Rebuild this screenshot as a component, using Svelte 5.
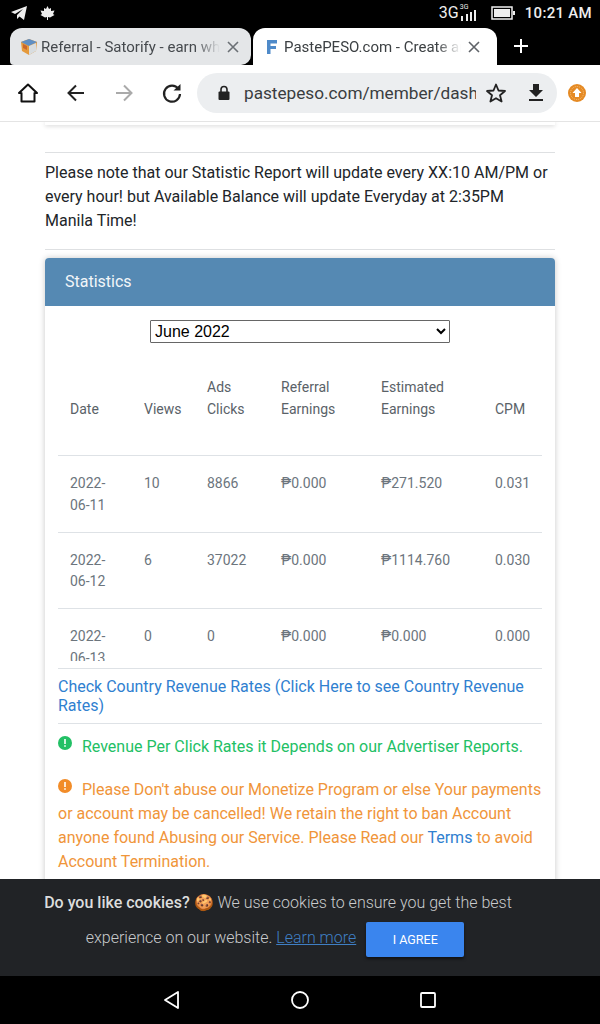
<script>
  const rows = [
    { date: "2022-06-11", views: "10", clicks: "8866", ref: "₱0.000", est: "₱271.520", cpm: "0.031" },
    { date: "2022-06-12", views: "6", clicks: "37022", ref: "₱0.000", est: "₱1114.760", cpm: "0.030" },
    { date: "2022-06-13", views: "0", clicks: "0", ref: "₱0.000", est: "₱0.000", cpm: "0.000" },
  ];
</script>

<div class="screen">
  <div class="status">
    <div class="status-left">
      <svg width="20" height="16" viewBox="0 0 20 16"><path d="M1 7 L17 1 L14 15 L9.500 11.500 L7 14 L7 10 L13 4 L5 9 Z" fill="#eee" /></svg>
      <svg width="15" height="14" viewBox="0 0 15 14"><path d="M7.500 0 L9 3 L11 2 L11 5 L14.500 4.500 L13 8 L14.500 9 L10 11.500 L8 11 L8 14 L7 14 L7 11 L5 11.500 L.5 9 L2 8 L.5 4.500 L4 5 L4 2 L6 3 Z" fill="#eee" /></svg>
    </div>
    <div class="status-right">
      <span class="net">3G</span>
      <span class="signal">
        <span class="net-small">3G</span>
        <svg width="18" height="12" viewBox="0 0 18 12"><path d="M1 6h2v5H1zM6 4h2v7H6zM10 2h2v9h-2zM14 0h2v11h-2z" fill="#eee" /></svg>
      </span>
      <svg class="battery" width="24" height="14" viewBox="0 0 24 14"><rect x="1" y="1" width="20" height="12" fill="none" stroke="#eee" stroke-width="1.500" /><rect x="3" y="3" width="16" height="8" fill="#eee" /><rect x="22" y="5" width="2" height="4" fill="#eee" /></svg>
      <span class="clock">10:21 AM</span>
    </div>
  </div>

  <div class="tabs">
    <div class="tab inactive">
      <svg class="favicon" width="18" height="18" viewBox="0 0 18 18"><path d="M9 1 L17 4 L16 13 L9 17 L2 13 L1 4 Z" fill="#e59a3c" /><path d="M9 1 L17 4 L9 8 L1 4 Z" fill="#5f8fc4" /><path d="M9 8 L16 5 L16 13 L9 17 Z" fill="#d8dde0" /><path d="M3 6 L7 8 L7 12 L3 10 Z" fill="#c9672c" /></svg>
      <span class="tab-title">Referral - Satorify - earn wh</span>
      <svg class="close" width="14" height="14" viewBox="0 0 14 14"><path d="M2 2 L12 12 M12 2 L2 12" stroke="#6b7075" stroke-width="1.600" /></svg>
    </div>
    <div class="tab active">
      <svg class="favicon" width="18" height="18" viewBox="0 0 18 18"><path d="M4 2 H14 V5.500 H7.500 V8 H13 V11 H7.500 V16 H4 Z" fill="#4f8ac9" /></svg>
      <span class="tab-title">PastePESO.com - Create ar</span>
      <svg class="close" width="14" height="14" viewBox="0 0 14 14"><path d="M2 2 L12 12 M12 2 L2 12" stroke="#5f6368" stroke-width="1.600" /></svg>
    </div>
    <svg class="plus" width="16" height="16" viewBox="0 0 16 16"><path d="M8 1 V15 M1 8 H15" stroke="#fff" stroke-width="2" /></svg>
  </div>

  <div class="toolbar">
    <svg class="tool" width="22" height="22" viewBox="0 0 22 22"><path d="M11 2.500 L20 11 H17.500 V19.500 H4.500 V11 H2 Z" fill="none" stroke="#111" stroke-width="2" stroke-linejoin="round" /></svg>
    <svg class="tool" width="22" height="22" viewBox="0 0 22 22"><path d="M19 11 H4 M11 3.500 L3.500 11 L11 18.500" fill="none" stroke="#222" stroke-width="2" /></svg>
    <svg class="tool" width="22" height="22" viewBox="0 0 22 22"><path d="M3 11 H18 M11 3.500 L18.500 11 L11 18.500" fill="none" stroke="#aaa" stroke-width="2" /></svg>
    <svg class="tool" width="22" height="22" viewBox="0 0 22 22"><path d="M17.500 7 A8 8 0 1 0 19 12" fill="none" stroke="#222" stroke-width="2.200" /><path d="M12.500 8.500 L19.500 8.500 L19.500 2 Z" fill="#222" /></svg>
    <div class="omnibox">
      <svg width="14" height="16" viewBox="0 0 14 16"><path d="M4 7 V4.500 A3 3 0 0 1 10 4.500 V7" fill="none" stroke="#222" stroke-width="1.600" /><rect x="1.500" y="6.500" width="11" height="8.500" rx="1" fill="#222" /></svg>
      <span class="url">pastepeso.com/member/dash</span>
      <svg class="star" width="22" height="22" viewBox="0 0 22 22"><path d="M11 2.500 L13.500 8.500 L20 9 L15 13.200 L16.600 19.500 L11 16.200 L5.400 19.500 L7 13.200 L2 9 L8.500 8.500 Z" fill="none" stroke="#222" stroke-width="1.800" stroke-linejoin="round" /></svg>
      <svg class="dl" width="18" height="20" viewBox="0 0 18 20"><path d="M6 1 H12 V7 H16 L9 14 L2 7 H6 Z" fill="#222" /><rect x="2" y="16" width="14" height="2" fill="#222" /></svg>
    </div>
    <svg class="update" width="20" height="20" viewBox="0 0 20 20"><circle cx="10" cy="10" r="9" fill="#e58a24" /><circle cx="10" cy="10" r="6.500" fill="none" stroke="#f6c88a" stroke-width=".8" stroke-dasharray="1 1" /><path d="M10 5 L14.500 10 H12 V14 H8 V10 H5.500 Z" fill="#fff" /></svg>
  </div>

  <div class="page">
    <div class="prev-card"></div>
    <div class="content">
      <hr class="rule" />
      <p class="note">Please note that our Statistic Report will update every XX:10 AM/PM or every hour! but Available Balance will update Everyday at 2:35PM Manila Time!</p>
      <hr class="rule second" />

      <section class="card">
        <div class="card-header">Statistics</div>
        <div class="card-body">
          <div class="month">
            <select>
              <option>June 2022</option>
            </select>
          </div>

          <div class="table-wrap">
            <table>
              <thead>
                <tr>
                  <th class="c-date">Date</th>
                  <th class="c-views">Views</th>
                  <th class="c-clicks">Ads Clicks</th>
                  <th class="c-ref">Referral Earnings</th>
                  <th class="c-est">Estimated Earnings</th>
                  <th class="c-cpm">CPM</th>
                </tr>
              </thead>
              <tbody>
                {#each rows as row}
                  <tr>
                    <td>{row.date}</td>
                    <td>{row.views}</td>
                    <td>{row.clicks}</td>
                    <td>{row.ref}</td>
                    <td>{row.est}</td>
                    <td>{row.cpm}</td>
                  </tr>
                {/each}
              </tbody>
            </table>
          </div>

          <div class="rates">
            <span class="link">Check Country Revenue Rates (Click Here to see Country Revenue Rates)</span>
          </div>

          <p class="green">
            <svg class="alert" width="14" height="14" viewBox="0 0 14 14"><circle cx="7" cy="7" r="7" fill="#22c065" /><path d="M6.200 3 H7.800 V8 H6.200 Z M6.200 9.200 H7.800 V10.800 H6.200 Z" fill="#fff" /></svg>
            Revenue Per Click Rates it Depends on our Advertiser Reports.
          </p>
          <p class="orange">
            <svg class="alert" width="14" height="14" viewBox="0 0 14 14"><circle cx="7" cy="7" r="7" fill="#f28c28" /><path d="M6.200 3 H7.800 V8 H6.200 Z M6.200 9.200 H7.800 V10.800 H6.200 Z" fill="#fff" /></svg>
            Please Don't abuse our Monetize Program or else Your payments or account may be cancelled! We retain the right to ban Account anyone found Abusing our Service. Please Read our <span class="link">Terms</span> to avoid Account Termination.
          </p>
        </div>
      </section>
    </div>

    <div class="cookie">
      <div class="cookie-line"><strong>Do you like cookies?</strong> 🍪 We use cookies to ensure you get the best</div>
      <div class="cookie-line second-line">
        <span>experience on our website. <span class="learn">Learn more</span></span>
        <button>I AGREE</button>
      </div>
    </div>
  </div>

  <div class="navbar">
    <svg width="20" height="20" viewBox="0 0 20 20"><path d="M16 2 L3 10 L16 18 Z" fill="none" stroke="#fff" stroke-width="1.800" stroke-linejoin="round" /></svg>
    <svg width="20" height="20" viewBox="0 0 20 20"><circle cx="10" cy="10" r="8" fill="none" stroke="#fff" stroke-width="1.800" /></svg>
    <svg width="20" height="20" viewBox="0 0 20 20"><rect x="3" y="3" width="14" height="14" rx="1" fill="none" stroke="#fff" stroke-width="1.800" /></svg>
  </div>
</div>

<style>
  :global(body) {
    margin: 0;
    font-family: Roboto, "Liberation Sans", sans-serif;
  }

  .screen {
    width: 600px;
    height: 1024px;
    display: flex;
    flex-direction: column;
    overflow: hidden;
    background: #fff;
    color: #212529;
  }

  .status {
    height: 28px;
    flex: none;
    background: #000;
    color: #eee;
    display: flex;
    justify-content: space-between;
    align-items: center;
    padding: 0 8px 3px 10px;
    box-sizing: border-box;
  }
  .status-left,
  .status-right {
    display: flex;
    align-items: center;
  }
  .status-left {
    gap: 10px;
  }
  .net {
    font-size: 16px;
    margin-right: 1px;
  }
  .signal {
    display: flex;
    flex-direction: column;
    width: 18px;
    line-height: 6px;
  }
  .net-small {
    font-size: 7px;
  }
  .battery {
    margin-left: 13px;
    margin-right: 10px;
  }
  .clock {
    font-size: 15px;
    font-weight: 500;
    letter-spacing: .3px;
  }

  .tabs {
    height: 37px;
    flex: none;
    background: #000;
    display: flex;
    align-items: stretch;
    padding-left: 10px;
    box-sizing: border-box;
  }
  .tab {
    width: 241px;
    display: flex;
    align-items: center;
    padding: 0 11px 0 10px;
    box-sizing: border-box;
    border-radius: 12px 12px 0 0;
    font-size: 15px;
  }
  .tab.inactive {
    background: #e4e6e8;
    color: #45494d;
    border-radius: 12px 12px 10px 4px;
  }
  .tab.active {
    background: #fff;
    color: #3c4043;
    width: 244px;
    margin-left: 2px;
    padding-right: 16px;
  }
  .tab-title {
    flex: 1;
    min-width: 0;
    margin-left: 3px;
    white-space: nowrap;
    overflow: hidden;
    mask-image: linear-gradient(to right, #000 86%, transparent);
  }
  .favicon,
  .close {
    flex: none;
  }
  .close {
    margin-left: 6px;
  }
  .plus {
    margin: 10px 0 0 16px;
  }

  .toolbar {
    height: 57px;
    flex: none;
    background: #fff;
    border-bottom: 1px solid #e4e4e4;
    box-sizing: border-box;
    display: flex;
    align-items: center;
    padding: 0 13px 0 17px;
  }
  .tool {
    flex: none;
    margin-right: 26px;
  }
  .tool:nth-child(4) {
    margin-right: 14px;
  }
  .omnibox {
    width: 360px;
    flex: none;
    height: 40px;
    background: #eceef0;
    border-radius: 20px;
    display: flex;
    align-items: center;
    padding-left: 20px;
    box-sizing: border-box;
  }
  .url {
    width: 232px;
    flex: none;
    margin-left: 13px;
    font-size: 17.200px;
    color: #3a3d40;
    white-space: nowrap;
    overflow: hidden;
  }
  .star {
    margin-left: 9px;
  }
  .dl {
    margin-left: 20px;
  }
  .update {
    margin-left: 10px;
    flex: none;
  }

  .page {
    flex: 1;
    min-height: 0;
    position: relative;
    overflow: hidden;
  }
  .prev-card {
    height: 3px;
    margin: 0 45px;
    box-shadow: 0 1px 4px rgba(0, 0, 0, .18);
  }
  .content {
    padding: 0 45px;
  }
  .rule {
    border: 0;
    border-top: 1px solid #dee0e2;
    margin: 27px 0 0;
  }
  .rule.second {
    margin: 16px 0 0;
  }
  .note {
    margin: 8px 0 0;
    font-size: 16px;
    line-height: 24px;
  }

  .card {
    margin-top: 8px;
    border-radius: 4px;
    box-shadow: 0 0 6px rgba(0, 0, 0, .22);
    background: #fff;
  }
  .card-header {
    height: 48px;
    background: #5589b3;
    color: #f2f6f9;
    font-size: 16px;
    line-height: 47px;
    padding-left: 20px;
    border-radius: 4px 4px 0 0;
  }
  .card-body {
    padding: 14px 13px 40px;
  }
  .month {
    display: flex;
    justify-content: center;
  }
  select {
    width: 300px;
    height: 23px;
    font-family: "Liberation Sans", Arial, sans-serif;
    font-size: 16px;
    background: #fff;
    color: #000;
    border: 1px solid #666;
    border-radius: 1px;
    padding: 0;
  }

  .table-wrap {
    height: 310px;
    margin-top: 8px;
    overflow: hidden;
  }
  table {
    width: 484px;
    table-layout: fixed;
    border-collapse: collapse;
    font-size: 14px;
    line-height: 21.500px;
    color: #6c757d;
  }
  th,
  td {
    box-sizing: border-box;
  }
  th {
    font-weight: 400;
    text-align: left;
    vertical-align: bottom;
    padding: 26px 12px 35px;
    color: #5a6268;
    border-bottom: 1px solid #dee2e6;
  }
  td {
    padding: 17px 12px 15.500px;
    vertical-align: top;
    border-bottom: 1px solid #dee2e6;
  }
  .c-date { width: 74px; }
  .c-views { width: 63px; }
  .c-clicks { width: 74px; }
  .c-ref { width: 100px; }
  .c-est { width: 114px; }
  .c-cpm { width: 59px; }

  .rates {
    border-top: 1px solid #dee2e6;
    border-bottom: 1px solid #dee2e6;
    margin-top: 7px;
    padding: 8px 0;
    font-size: 16px;
    line-height: 19px;
  }
  .link {
    color: #2f80d0;
  }
  .green,
  .orange {
    font-size: 16px;
    line-height: 24px;
    margin: 0;
  }
  .green {
    color: #22c065;
    margin-top: 11px;
  }
  .orange {
    color: #f0953a;
    margin-top: 19px;
  }
  .alert {
    margin-right: 6px;
    vertical-align: 2px;
  }

  .cookie {
    position: absolute;
    left: 0;
    right: 0;
    bottom: 0;
    height: 97px;
    background: #212326;
    color: #c9cbcd;
    font-size: 16px;
    font-weight: 300;
    box-sizing: border-box;
    padding: 12px 44px 0 0;
    text-align: center;
  }
  .cookie strong {
    font-weight: 500;
    color: #dcdddd;
  }
  .cookie-line {
    line-height: 24px;
  }
  .second-line {
    display: flex;
    justify-content: center;
    align-items: flex-start;
    margin-top: 7px;
    padding-right: 6px;
    line-height: 31px;
    white-space: pre;
  }
  .learn {
    color: #3f7fc4;
    text-decoration: underline;
  }
  button {
    width: 98px;
    height: 35px;
    margin-left: 10px;
    background: #3a85ee;
    color: #fff;
    border: 0;
    border-radius: 2px;
    font-family: inherit;
    font-size: 12.500px;
    font-weight: 400;
    box-shadow: 0 2px 3px rgba(0, 0, 0, .5);
  }

  .navbar {
    height: 48px;
    flex: none;
    background: #000;
    display: flex;
    justify-content: center;
    align-items: center;
    gap: 108px;
  }
</style>
